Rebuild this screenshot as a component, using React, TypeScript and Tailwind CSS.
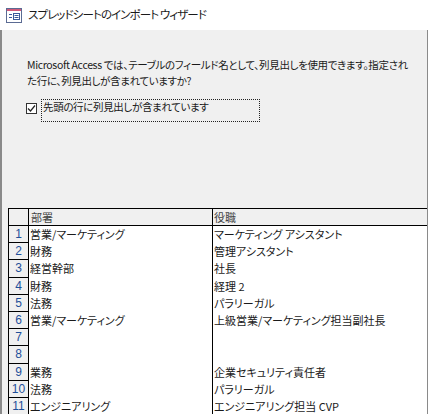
import React from 'react';

const rows = [
  { dept: '営業/マーケティング', title: 'マーケティング アシスタント' },
  { dept: '財務', title: '管理アシスタント' },
  { dept: '経営幹部', title: '社長' },
  { dept: '財務', title: '経理 2' },
  { dept: '法務', title: 'パラリーガル' },
  { dept: '営業/マーケティング', title: '上級営業/マーケティング担当副社長' },
  { dept: '', title: '' },
  { dept: '', title: '' },
  { dept: '業務', title: '企業セキュリティ責任者' },
  { dept: '法務', title: 'パラリーガル' },
  { dept: 'エンジニアリング', title: 'エンジニアリング担当 CVP' },
];

// small datasheet icon in the caption
const SheetIcon = () => (
  <svg width="16" height="15" viewBox="0 0 16 15">
    <rect x="0.5" y="0.5" width="15" height="14" fill="#fff" stroke="#5b6b93" />
    <rect x="1" y="1" width="14" height="2" fill="#d0587a" />
    <path d="M3 6.5h3M3 9.5h3" stroke="#3a5a9a" strokeWidth="1" />
    <rect x="7.5" y="5.5" width="6" height="6" fill="none" stroke="#3a5a9a" />
    <path d="M8.5 7.5h4M8.5 9.5h4" stroke="#3a5a9a" strokeWidth="1" />
  </svg>
);

const CheckBox = () => (
  <div className="w-[11px] h-[11px] border border-[#333] bg-white flex items-center justify-center">
    <svg width="9" height="9" viewBox="0 0 9 9">
      <path d="M1 4.5 L3.5 7 L8 1.5" fill="none" stroke="#222" strokeWidth="1.2" />
    </svg>
  </div>
);

export default function App() {
  return (
    <div className="w-[428px] h-[414px] overflow-hidden bg-white flex flex-col text-[#1a1a1a] [font-family:'Noto_Sans_CJK_JP',sans-serif] [font-feature-settings:'palt']">
      <div className="h-[30px] shrink-0 flex items-center pl-[6px] gap-[6px]">
        <SheetIcon />
        <span className="text-[11.5px] tracking-[-0.9px] leading-none">スプレッドシートのインポート ウィザード</span>
      </div>

      <div className="flex-1 flex flex-col bg-[#f0f0f0] border-l-2 border-r border-[#8a8a8a]">
        <p className="pt-[27px] pl-[25px] text-[10.5px] tracking-[-0.35px] leading-[16px] whitespace-nowrap">
          Microsoft Access では、テーブルのフィールド名として、列見出しを使用できます。指定され
          <br />
          た行に、列見出しが含まれていますか?
        </p>

        <div className="mt-[10px] ml-[24px] flex items-start gap-[4px]">
          <div className="pt-[4px]">
            <CheckBox />
          </div>
          <div className="w-[219px] h-[23px] border border-dotted border-[#222] text-[10.5px] tracking-[-0.35px] leading-[13px] pl-[1px]">
            先頭の行に列見出しが含まれています
          </div>
        </div>

        <div className="mt-[86px] ml-[6px] bg-white border-t border-l border-black text-[11px]">
          <div className="flex h-[17px] bg-[#f0f0f0] border-b border-black text-[#444]">
            <div className="w-[20px] shrink-0 border-r border-black" />
            <div className="w-[183px] shrink-0 pl-[2px] leading-[16px]">部署</div>
            <div className="flex-1 border-l border-black pl-[1px] leading-[16px]">役職</div>
          </div>
          {rows.map((r, i) => (
            <div key={i} className="flex h-[17.2px]">
              <div className="w-[20px] shrink-0 bg-[#f0f0f0] border-r border-b border-black flex items-center justify-center text-[12px] text-[#1e4f9a] [font-family:'Liberation_Sans',sans-serif]">
                {i + 1}
              </div>
              <div className="w-[183px] shrink-0 pl-[1px] leading-[17px] whitespace-nowrap">{r.dept}</div>
              <div className="flex-1 border-l border-black pl-[1px] leading-[17px] whitespace-nowrap">{r.title}</div>
            </div>
          ))}
        </div>
      </div>
    </div>
  );
}
